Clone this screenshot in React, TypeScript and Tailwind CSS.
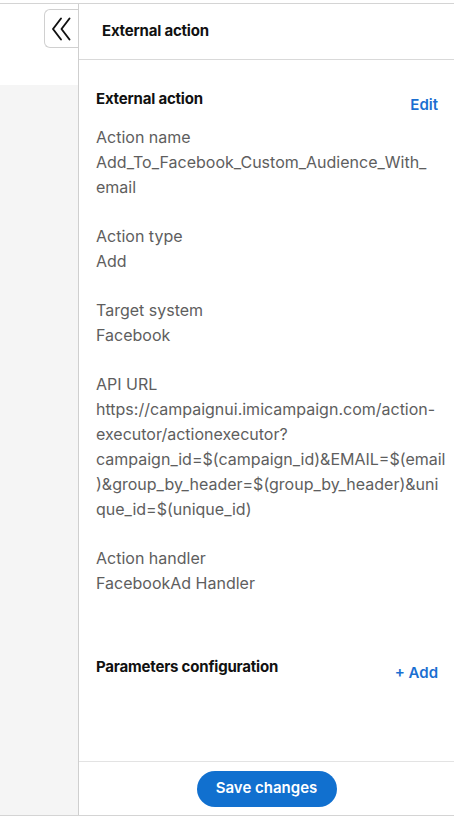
import React from "react";

const fields: { label: string; value: string[] }[] = [
  { label: "Action name", value: ["Add_To_Facebook_Custom_Audience_With_", "email"] },
  { label: "Action type", value: ["Add"] },
  { label: "Target system", value: ["Facebook"] },
  {
    label: "API URL",
    value: [
      "https://campaignui.imicampaign.com/action-",
      "executor/actionexecutor?",
      "campaign_id=$(campaign_id)&EMAIL=$(email",
      ")&group_by_header=$(group_by_header)&uni",
      "que_id=$(unique_id)",
    ],
  },
  { label: "Action handler", value: ["FacebookAd Handler"] },
];

export default function App() {
  return (
    <div
      className="w-[454px] h-[819px] bg-white flex flex-col overflow-hidden"
      style={{ fontFamily: "Inter, sans-serif" }}
    >
      <div className="h-[3px] shrink-0" />
      <div className="flex flex-1 min-h-0 border-t border-[#d4d4d4] border-b">
        {/* left canvas */}
        <div className="w-[78px] shrink-0 flex flex-col">
          <div className="h-[81px] bg-white flex justify-end pt-[5px]">
            <button className="w-[34px] h-[39px] border border-r-0 border-[#d0d0d0] rounded-l-md bg-white flex items-center justify-center">
              <svg width="24" height="24" viewBox="0 0 24 24" fill="none" stroke="#111" strokeWidth={1.9} strokeLinecap="round" strokeLinejoin="round">
                <path d="M11 1.5 3 12l8 10.5" />
                <path d="M19.5 1.5 11.5 12l8 10.5" />
              </svg>
            </button>
          </div>
          <div className="flex-1 bg-[#f5f5f5]" />
        </div>

        {/* side panel */}
        <div className="flex-1 border-l border-[#cfcfcf] flex flex-col min-w-0">
          <div className="h-[56px] shrink-0 border-b border-[#d9d9d9] flex items-center pl-[23px]">
            <h1 className="text-[15px] font-bold text-[#111] tracking-[-0.2px]">External action</h1>
          </div>

          <div className="flex-1 pl-[17px] pr-[16px] pt-[28px]">
            <div className="flex items-start justify-between">
              <h2 className="text-[15px] font-bold text-[#111] tracking-[-0.2px]">External action</h2>
              <button className="text-[15px] font-semibold text-[#1a6fd1] mt-[6px]">Edit</button>
            </div>

            <div className="mt-[8px] flex flex-col gap-[24px] text-[16px] leading-[25px] text-[#5e5e5e]">
              {fields.map((f) => (
                <div key={f.label}>
                  <div>{f.label}</div>
                  {f.value.map((v) => (
                    <div key={v} className="whitespace-nowrap">{v}</div>
                  ))}
                </div>
              ))}
            </div>

            <div className="mt-[60px] flex items-start justify-between">
              <h2 className="text-[15px] font-bold text-[#111] tracking-[-0.2px]">Parameters configuration</h2>
              <button className="text-[15px] font-semibold text-[#1a6fd1] mt-[6px]">+ Add</button>
            </div>
          </div>

          <div className="h-[54px] shrink-0 border-t border-[#e3e3e3] flex items-center justify-center">
            <button className="w-[140px] h-[36px] rounded-full bg-[#1170cf] text-white text-[15px] font-semibold">
              Save changes
            </button>
          </div>
        </div>
      </div>
      <div className="h-[3px] shrink-0" />
    </div>
  );
}
